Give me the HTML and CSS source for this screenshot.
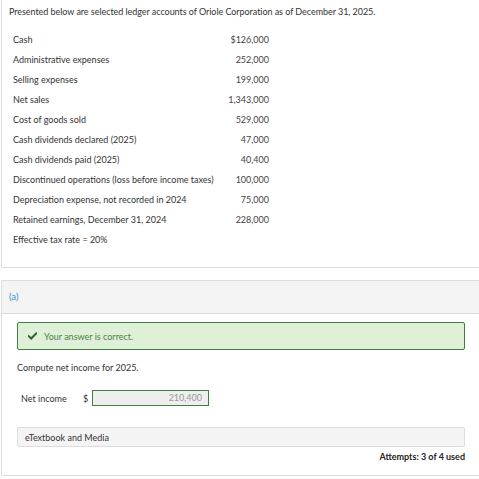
FILE: index.html
```html
<!DOCTYPE html>
<html>
<head>
<meta charset="utf-8">
<link rel="stylesheet" href="styles.css">
</head>
<body>
<div class="panel intro">
  <p class="lead">Presented below are selected ledger accounts of Oriole Corporation as of December 31, 2025.</p>
  <div class="ledger">
    <div class="row"><span class="lbl">Cash</span><span class="val">$126,000</span></div>
    <div class="row"><span class="lbl">Administrative expenses</span><span class="val">252,000</span></div>
    <div class="row"><span class="lbl">Selling expenses</span><span class="val">199,000</span></div>
    <div class="row"><span class="lbl">Net sales</span><span class="val">1,343,000</span></div>
    <div class="row"><span class="lbl">Cost of goods sold</span><span class="val">529,000</span></div>
    <div class="row"><span class="lbl">Cash dividends declared (2025)</span><span class="val">47,000</span></div>
    <div class="row"><span class="lbl">Cash dividends paid (2025)</span><span class="val">40,400</span></div>
    <div class="row"><span class="lbl">Discontinued operations (loss before income taxes)</span><span class="val">100,000</span></div>
    <div class="row"><span class="lbl">Depreciation expense, not recorded in 2024</span><span class="val">75,000</span></div>
    <div class="row"><span class="lbl">Retained earnings, December 31, 2024</span><span class="val">228,000</span></div>
    <div class="row"><span class="lbl">Effective tax rate = 20%</span><span class="val"></span></div>
  </div>
</div>
<div class="panel part">
  <div class="part-head">(a)</div>
  <div class="part-body">
    <div class="correct">
      <svg class="check" viewBox="0 0 12 10" width="9" height="8"><path d="M1 5.2 L4.3 8.4 L11 1.6" fill="none" stroke="#2b642b" stroke-width="2.6" stroke-linecap="square"/></svg>
      <span>Your answer is correct.</span>
    </div>
    <p class="prompt">Compute net income for 2025.</p>
    <div class="answer">
      <span class="alabel">Net income</span>
      <span class="dollar">$</span>
      <span class="field">210,400</span>
    </div>
    <div class="media">eTextbook and Media</div>
    <div class="attempts">Attempts: 3 of 4 used</div>
  </div>
</div>
</body>
</html>
```
FILE: styles.css
```css
html, body {
  margin: 0;
  padding: 0;
  overflow: hidden;
  background: #fff;
}
body {
  font-family: Lato, "Open Sans", sans-serif;
  font-size: 9px;
  color: #333;
  padding-left: 1px;
}
.panel {
  width: 480px;
  box-sizing: border-box;
  border: 1px solid #dcdcdc;
  border-top: none;
  border-radius: 0 0 2px 2px;
}
.intro {
  padding: 5px 7px 0 7px;
  height: 268px;
}
.lead {
  margin: 0;
  line-height: 14px;
  letter-spacing: -0.05px;
}
.ledger {
  margin-top: 11px;
  margin-left: 4px;
  width: 256px;
}
.row {
  display: flex;
  justify-content: space-between;
  height: 20px;
  line-height: 20px;
}
.val {
  color: #444;
}
.part {
  margin-top: 12px;
  border-top: 1px solid #dcdcdc;
}
.part-head {
  background: #f4f4f4;
  border-bottom: 1px solid #dcdcdc;
  height: 32px;
  line-height: 32px;
  padding-left: 7px;
  color: #3a8cc4;
  font-size: 9.5px;
}
.part-body {
  padding: 8px 15px 10px 15px;
}
.correct {
  display: flex;
  align-items: center;
  height: 26px;
  border: 1px solid #3f7f3f;
  border-radius: 2px;
  background: #dff0d8;
  padding-left: 10px;
  color: #4c7f4c;
  gap: 7px;
}
.prompt {
  margin: 0;
  height: 18px;
  line-height: 18px;
  margin-top: 9px;
}
.answer {
  display: flex;
  align-items: center;
  margin-top: 13px;
  padding-left: 4px;
  height: 16px;
}
.alabel {
  width: 62px;
}
.dollar {
  width: 9px;
}
.field {
  box-sizing: border-box;
  width: 117px;
  height: 16px;
  line-height: 14px;
  border: 1px solid #3f7f3f;
  background: #eee;
  color: #999;
  text-align: right;
  padding-right: 6px;
}
.media {
  margin-top: 21px;
  height: 20px;
  line-height: 19px;
  box-sizing: border-box;
  background: #f4f4f4;
  border: 1px solid #ddd;
  border-radius: 2px;
  padding-left: 7px;
}
.attempts {
  text-align: right;
  font-weight: bold;
  color: #222;
  margin-top: 2px;
  line-height: 16px;
}
```
